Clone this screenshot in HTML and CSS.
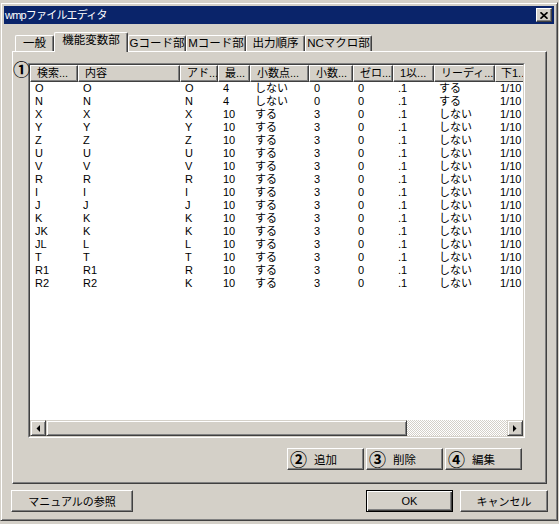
FILE: index.html
```html
<!DOCTYPE html>
<html lang="ja">
<head>
<meta charset="utf-8">
<title>wmpファイルエディタ</title>
<link rel="stylesheet" href="styles.css">
</head>
<body>
<div class="window">
  <div class="titlebar">
    <span class="title">wmpファイルエディタ</span>
    <span class="close-btn"><svg width="8" height="7" viewBox="0 0 8 7"><path d="M0.5 0.3 L7.5 6.7 M7.5 0.3 L0.5 6.7" stroke="#000" stroke-width="1.7" fill="none"/></svg></span>
  </div>
  <div class="tabs">
    <div class="tab t1">一般</div>
    <div class="tab active t2">機能変数部</div>
    <div class="tab t3">Gコード部</div>
    <div class="tab t4">Mコード部</div>
    <div class="tab t5">出力順序</div>
    <div class="tab t6">NCマクロ部</div>
  </div>
  <div class="panel">
    <div class="list-wrap">
      <span class="marker">①</span>
      <div class="lv-outer">
        <div class="lv-inner">
          <div class="lv-header">
            <div class="hcell">検索...</div>
            <div class="hcell">内容</div>
            <div class="hcell">アド...</div>
            <div class="hcell">最...</div>
            <div class="hcell">小数点...</div>
            <div class="hcell">小数...</div>
            <div class="hcell">ゼロ...</div>
            <div class="hcell">1以...</div>
            <div class="hcell">リーディ...</div>
            <div class="hcell">下1..</div>
          </div>
          <div class="lv-body">
            <div class="row"><span>O</span><span>O</span><span>O</span><span>4</span><span>しない</span><span>0</span><span>0</span><span>.1</span><span>する</span><span>1/10</span></div>
            <div class="row"><span>N</span><span>N</span><span>N</span><span>4</span><span>しない</span><span>0</span><span>0</span><span>.1</span><span>する</span><span>1/10</span></div>
            <div class="row"><span>X</span><span>X</span><span>X</span><span>10</span><span>する</span><span>3</span><span>0</span><span>.1</span><span>しない</span><span>1/10</span></div>
            <div class="row"><span>Y</span><span>Y</span><span>Y</span><span>10</span><span>する</span><span>3</span><span>0</span><span>.1</span><span>しない</span><span>1/10</span></div>
            <div class="row"><span>Z</span><span>Z</span><span>Z</span><span>10</span><span>する</span><span>3</span><span>0</span><span>.1</span><span>しない</span><span>1/10</span></div>
            <div class="row"><span>U</span><span>U</span><span>U</span><span>10</span><span>する</span><span>3</span><span>0</span><span>.1</span><span>しない</span><span>1/10</span></div>
            <div class="row"><span>V</span><span>V</span><span>V</span><span>10</span><span>する</span><span>3</span><span>0</span><span>.1</span><span>しない</span><span>1/10</span></div>
            <div class="row"><span>R</span><span>R</span><span>R</span><span>10</span><span>する</span><span>3</span><span>0</span><span>.1</span><span>しない</span><span>1/10</span></div>
            <div class="row"><span>I</span><span>I</span><span>I</span><span>10</span><span>する</span><span>3</span><span>0</span><span>.1</span><span>しない</span><span>1/10</span></div>
            <div class="row"><span>J</span><span>J</span><span>J</span><span>10</span><span>する</span><span>3</span><span>0</span><span>.1</span><span>しない</span><span>1/10</span></div>
            <div class="row"><span>K</span><span>K</span><span>K</span><span>10</span><span>する</span><span>3</span><span>0</span><span>.1</span><span>しない</span><span>1/10</span></div>
            <div class="row"><span>JK</span><span>K</span><span>K</span><span>10</span><span>する</span><span>3</span><span>0</span><span>.1</span><span>しない</span><span>1/10</span></div>
            <div class="row"><span>JL</span><span>L</span><span>L</span><span>10</span><span>する</span><span>3</span><span>0</span><span>.1</span><span>しない</span><span>1/10</span></div>
            <div class="row"><span>T</span><span>T</span><span>T</span><span>10</span><span>する</span><span>3</span><span>0</span><span>.1</span><span>しない</span><span>1/10</span></div>
            <div class="row"><span>R1</span><span>R1</span><span>R</span><span>10</span><span>する</span><span>3</span><span>0</span><span>.1</span><span>しない</span><span>1/10</span></div>
            <div class="row"><span>R2</span><span>R2</span><span>K</span><span>10</span><span>する</span><span>3</span><span>0</span><span>.1</span><span>しない</span><span>1/10</span></div>
          </div>
          <div class="hscroll">
            <span class="sb-btn"><svg width="4" height="7" viewBox="0 0 4 7"><polygon points="4,0 4,7 0.5,3.5" fill="#000"/></svg></span>
            <span class="sb-thumb"></span>
            <span class="sb-track"></span>
            <span class="sb-btn"><svg width="4" height="7" viewBox="0 0 4 7"><polygon points="0,0 0,7 3.5,3.5" fill="#000"/></svg></span>
          </div>
        </div>
      </div>
    </div>
    <div class="actions">
      <button class="btn act"><span class="num">②</span>追加</button>
      <button class="btn act"><span class="num">③</span>削除</button>
      <button class="btn act"><span class="num">④</span>編集</button>
    </div>
  </div>
  <div class="footer">
    <button class="btn manual">マニュアルの参照</button>
    <span class="spacer"></span>
    <button class="btn ok">OK</button>
    <button class="btn cancel">キャンセル</button>
  </div>
</div>
</body>
</html>
```

FILE: styles.css
```css
html, body {
  margin: 0;
  padding: 0;
}
body {
  width: 559px;
  height: 524px;
  overflow: hidden;
  background: #d4d0c8;
  font-family: "Liberation Sans", "Noto Sans CJK JP", sans-serif;
  font-size: 11px;
  color: #000;
}
.window {
  margin-top: 2px;
  width: 558px;
  height: 519px;
  box-sizing: border-box;
  border: 1px solid;
  border-color: #d4d0c8 #404040 #404040 #d4d0c8;
  box-shadow: inset 1px 1px #fff, inset -1px -1px #808080;
  padding: 3px;
  display: flex;
  flex-direction: column;
  background: #d4d0c8;
}
.titlebar {
  height: 18px;
  flex: none;
  background: #0a246a;
  color: #fff;
  display: flex;
  align-items: center;
  padding: 0 2px 0 1px;
}
.title {
  flex: 1;
  font-size: 11px;
  letter-spacing: -0.8px;
  line-height: 18px;
  white-space: nowrap;
}
.close-btn {
  width: 16px;
  height: 14px;
  box-sizing: border-box;
  background: #d4d0c8;
  border: 1px solid;
  border-color: #fff #404040 #404040 #fff;
  box-shadow: inset -1px -1px #808080;
  display: flex;
  align-items: center;
  justify-content: center;
}
.tabs {
  display: flex;
  align-items: flex-end;
  height: 19px;
  flex: none;
  margin-top: 8px;
  padding-left: 11px;
  position: relative;
  z-index: 1;
}
.tab {
  box-sizing: border-box;
  height: 16px;
  border-top: 1px solid #fff;
  border-left: 1px solid #fff;
  border-right: 1px solid #404040;
  box-shadow: inset -1px 0 #808080;
  border-radius: 2px 2px 0 0;
  text-align: center;
  font-size: 11.5px;
  line-height: 15px;
  white-space: nowrap;
  background: #d4d0c8;
}
.tab.active {
  height: 20px;
  margin-bottom: -1px;
  line-height: 14px;
}
.t1 { width: 39px; }
.t2 { width: 74px; }
.t3 { width: 58px; }
.t4 { width: 60px; }
.t5 { width: 59px; }
.t6 { width: 67px; }
.panel {
  flex: none;
  margin-left: 8px;
  width: 535px;
  height: 433px;
  box-sizing: border-box;
  border: 1px solid;
  border-color: #fff #404040 #404040 #fff;
  box-shadow: inset -1px -1px #808080;
  padding: 11px 21px 0 15px;
  display: flex;
  flex-direction: column;
}
.list-wrap {
  position: relative;
  width: 497px;
  height: 375px;
}
.marker {
  position: absolute;
  left: -15px;
  top: -3px;
  font-family: "Noto Sans CJK JP", sans-serif;
  font-size: 17px;
  line-height: 18px;
  font-weight: 700;
  z-index: 2;
}
.lv-outer {
  height: 100%;
  box-sizing: border-box;
  border: 1px solid;
  border-color: #808080 #fff #fff #808080;
}
.lv-inner {
  height: 100%;
  box-sizing: border-box;
  border: 1px solid;
  border-color: #404040 #d4d0c8 #d4d0c8 #404040;
  background: #fff;
  display: flex;
  flex-direction: column;
  overflow: hidden;
}
.lv-header,
.row {
  display: grid;
  grid-template-columns: 48px 102px 38px 32px 59px 44px 40px 41px 61px 28px;
  width: 493px;
  flex: none;
}
.hcell {
  box-sizing: border-box;
  height: 17px;
  border: 1px solid;
  border-color: #fff #404040 #404040 #fff;
  box-shadow: inset -1px -1px #808080;
  background: #d4d0c8;
  padding-left: 6px;
  line-height: 15px;
  white-space: nowrap;
  overflow: hidden;
}
.hcell:last-child {
  border-right: 0;
  box-shadow: none;
  padding-left: 5px;
}
.lv-body {
  flex: 1;
  overflow: hidden;
}
.row {
  height: 13px;
  line-height: 13px;
}
.row span {
  padding-left: 5px;
  white-space: nowrap;
}
.hscroll {
  height: 16px;
  flex: none;
  display: flex;
}
.sb-btn,
.sb-thumb {
  box-sizing: border-box;
  height: 16px;
  background: #d4d0c8;
  border: 1px solid;
  border-color: #d4d0c8 #404040 #404040 #d4d0c8;
  box-shadow: inset 1px 1px #fff, inset -1px -1px #808080;
}
.sb-btn {
  width: 16px;
  display: flex;
  align-items: center;
  justify-content: center;
}
.sb-thumb {
  width: 361px;
}
.sb-track {
  flex: 1;
  background: repeating-conic-gradient(#d4d0c8 0 25%, #fff 0 50%) 0 0 / 2px 2px;
}
.actions {
  display: flex;
  justify-content: flex-end;
  gap: 2px;
  margin-top: 10px;
  padding-right: 3px;
}
.btn {
  box-sizing: border-box;
  height: 22px;
  margin: 0;
  padding: 0;
  font: inherit;
  color: #000;
  background: #d4d0c8;
  border: 1px solid;
  border-color: #fff #404040 #404040 #fff;
  box-shadow: inset -1px -1px #808080;
  white-space: nowrap;
}
.act {
  width: 77px;
  display: flex;
  align-items: center;
  padding-left: 2px;
  text-align: left;
  font-size: 11.5px;
}
.num {
  font-family: "Noto Sans CJK JP", sans-serif;
  font-size: 17px;
  font-weight: 700;
  line-height: 18px;
  margin-right: 7px;
}
.footer {
  display: flex;
  flex: none;
  margin-top: 6px;
  height: 22px;
  padding: 0 6px 0 7px;
}
.spacer {
  flex: 1;
}
.manual {
  width: 122px;
}
.ok {
  width: 87px;
  margin-right: 7px;
  border: 1px solid #000;
  box-shadow: inset 1px 1px #fff, inset -1px -1px #404040, inset -2px -2px #808080;
}
.cancel {
  width: 88px;
}
```
